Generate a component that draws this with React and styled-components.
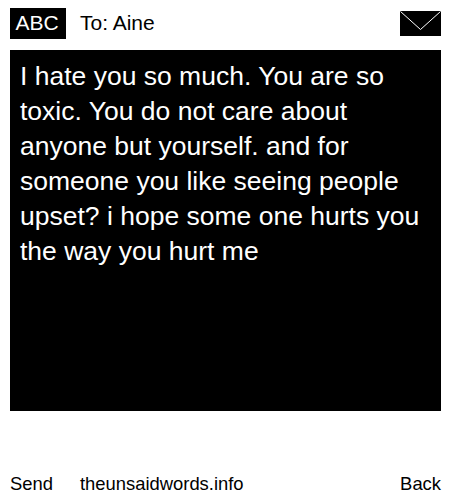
import React from 'react'
import styled, { createGlobalStyle } from 'styled-components'

const App = () => (
  <>
    <GlobalStyle />
    <Page>
      <Header>
        <Badge>ABC</Badge>
        <Recipient>To: Aine</Recipient>
        <Envelope viewBox="0 0 41 25">
          <rect width="41" height="25" fill="#000" />
          <path d="M0.5 0.5 L20.5 18.5 L40.5 0.5" fill="none" stroke="#fff" strokeWidth="1" />
        </Envelope>
      </Header>
      <Message>
        I hate you so much. You are so toxic. You do not care about anyone but
        yourself. and for someone you like seeing people upset? i hope some one
        hurts you the way you hurt me
      </Message>
      <Footer>
        <SoftKey>Send</SoftKey>
        <Site>theunsaidwords.info</Site>
        <BackKey>Back</BackKey>
      </Footer>
    </Page>
  </>
)

export default App

const GlobalStyle = createGlobalStyle`
  html, body {
    margin: 0;
    background: #fff;
  }
`
const Page = styled.div`
  width: 450px;
  height: 500px;
  box-sizing: border-box;
  padding: 8px 9px 0 10px;
  display: flex;
  flex-direction: column;
  font-family: 'Liberation Sans', Arial, sans-serif;
  color: #000;
`
const Header = styled.div`
  display: flex;
  align-items: center;
  height: 31px;
`
const Badge = styled.div`
  width: 56px;
  height: 31px;
  box-sizing: border-box;
  padding-right: 2px;
  line-height: 30px;
  text-align: center;
  background: #000;
  color: #fff;
  font-size: 21px;
`
const Recipient = styled.div`
  margin: 0 0 2px 14px;
  font-size: 21px;
  flex: 1;
`
const Envelope = styled.svg`
  width: 41px;
  height: 25px;
  display: block;
`
const Message = styled.div`
  margin-top: 11px;
  height: 361px;
  box-sizing: border-box;
  padding: 9px 10px;
  background: #000;
  color: #fff;
  font-size: 26.5px;
  line-height: 35px;
`
const Footer = styled.div`
  margin-top: 62px;
  display: flex;
  align-items: center;
  font-size: 18.4px;
`
const SoftKey = styled.div`
  width: 70px;
`
const Site = styled.div`
  flex: 1;
`
const BackKey = styled.div`
  margin-right: 0;
`
